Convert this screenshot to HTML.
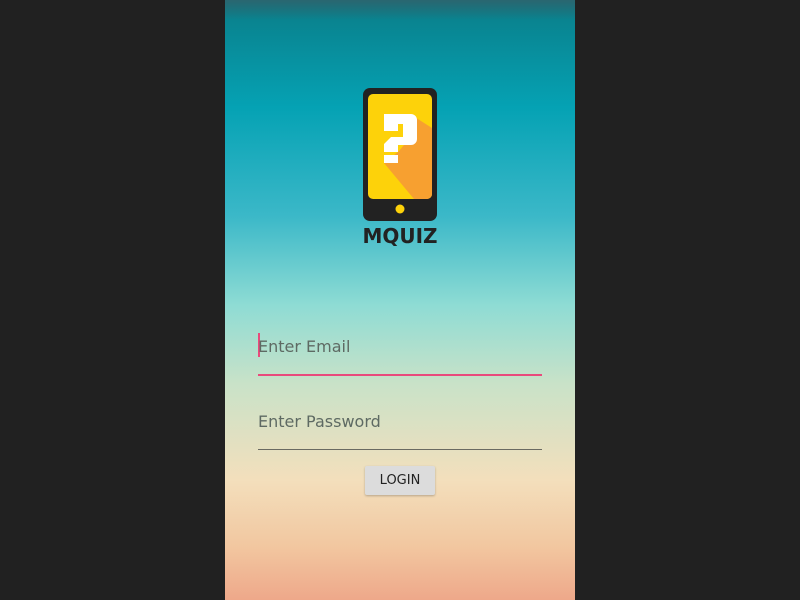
<!DOCTYPE html>
<html><head><style>
html,body{margin:0;width:800px;height:600px;background:#212121;overflow:hidden;font-family:"Liberation Sans",sans-serif}
#s{position:absolute;left:225px;top:0;width:350px;height:600px;overflow:hidden;
background:linear-gradient(180deg,#0a7d88 0%,#05a2b4 18%,#3bb8c8 36%,#8fdcd4 51%,#c9e2c8 64%,#f3dfbc 80%,#f2c7a0 91%,#eea88a 100%)}
#s:before{content:"";position:absolute;left:0;top:0;right:0;height:20px;background:linear-gradient(#2a6670,rgba(0,0,0,0))}
.t{position:absolute;left:33px;color:#5e6a63;font-family:"DejaVu Sans",sans-serif;font-size:16px}
.l{position:absolute;left:33px;width:284px}
</style></head><body>
<div id="s">
<svg style="position:absolute;left:135px;top:86px" width="80" height="162" viewBox="0 0 80 162">
<rect x="3" y="2" width="74" height="133" rx="7" fill="#222"/>
<rect x="8" y="8" width="64" height="105" rx="5" fill="#fdd20a"/>
<clipPath id="c"><rect x="8" y="8" width="64" height="105" rx="5"/></clipPath>
<polygon clip-path="url(#c)" points="50,28 72,42 72,113 54,113 24,77 38,66 44,59" fill="#f7a030"/>
<path d="M24 28 H51 A6 6 0 0 1 57 34 V53 A6 6 0 0 1 51 59 H38 V66 H24 V58 L31 51 H43 V38 H38 V45 H24 Z" fill="#fff"/>
<rect x="24" y="69" width="14" height="8" fill="#fff"/>
<circle cx="40" cy="123" r="4.5" fill="#fdd20a"/>
<text x="40" y="157" text-anchor="middle" font-family="DejaVu Sans" font-weight="bold" font-size="20" fill="#222">MQUIZ</text>
</svg>
<div style="position:absolute;left:33px;top:333px;width:2px;height:24px;background:#e94a7c"></div>
<div class="t" style="top:337px">Enter Email</div>
<div class="l" style="top:374px;height:2px;background:#e94a7c"></div>
<div class="t" style="top:412px">Enter Password</div>
<div class="l" style="top:449px;height:1px;background:#6a6a62"></div>
<div style="position:absolute;left:140px;top:466px;width:70px;height:29px;background:#dcdcdc;border-radius:2px;box-shadow:0 1px 2px rgba(0,0,0,.25);text-align:center;line-height:29px;font-size:13px;color:#222;font-family:'DejaVu Sans',sans-serif">LOGIN</div>
</div>
</body></html>
